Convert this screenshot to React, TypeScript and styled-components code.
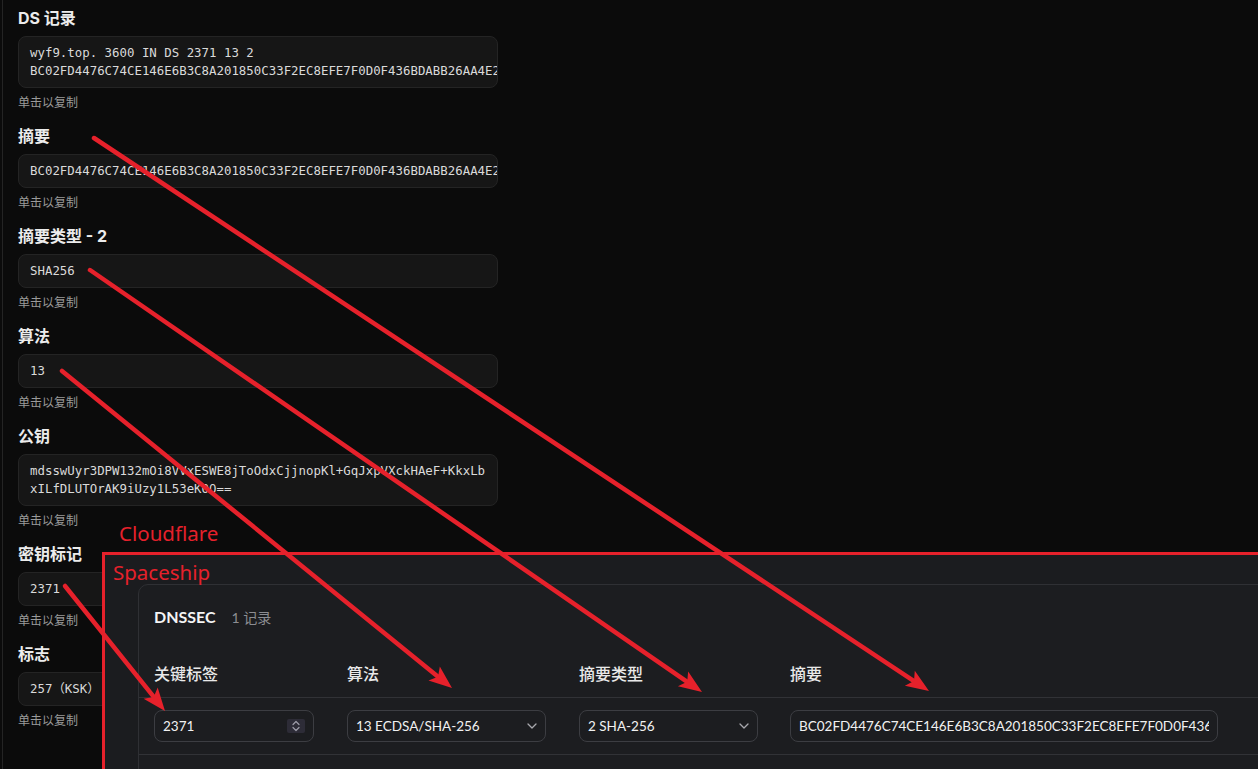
import React from 'react'
import styled, { createGlobalStyle } from 'styled-components'

const GlobalStyle = createGlobalStyle`
  html, body {
    margin: 0;
    padding: 0;
    background: #0b0b0b;
    overflow: hidden;
  }
  * {
    box-sizing: border-box;
  }
`

const Page = styled.div`
  position: relative;
  width: 1258px;
  height: 769px;
  overflow: hidden;
  background: #0b0b0b;
  font-family: Inter, "Noto Sans CJK SC", sans-serif;
`

const Sidebar = styled.div`
  margin-left: 2px;
  width: 500px;
  height: 100%;
  padding: 6px 0 0 15px;
  border-left: 1px solid #242424;
`

const Field = styled.section`
  margin-bottom: 13px;
`

const FieldLabel = styled.h3`
  margin: 0 0 6px;
  font-size: 16px;
  line-height: 24px;
  font-weight: 700;
  color: #ececec;
`

// long values are clipped by the box, the public key wraps anywhere
const CopyBox = styled.div<{ $wrap?: boolean }>`
  width: 480px;
  padding: 7px 11px;
  background: #161616;
  border: 1px solid #242424;
  border-radius: 8px;
  font-family: "DejaVu Sans Mono", "Noto Sans CJK SC", monospace;
  font-size: 12.4px;
  line-height: 18px;
  color: #dadada;
  overflow: hidden;
  white-space: ${p => (p.$wrap ? 'normal' : 'nowrap')};
  word-break: ${p => (p.$wrap ? 'break-all' : 'normal')};
`

const Hint = styled.div`
  margin-top: 5px;
  font-family: "Noto Sans CJK SC", sans-serif;
  font-size: 12px;
  line-height: 18px;
  color: #9a9a9a;
`

const Tag = styled.span<{ $left: number; $top: number }>`
  position: absolute;
  left: ${p => p.$left}px;
  top: ${p => p.$top}px;
  z-index: 3;
  font-family: "Noto Sans", "Open Sans", sans-serif;
  font-size: 20.5px;
  line-height: 26px;
  color: #e6212b;
  white-space: nowrap;
`

const Snapshot = styled.div`
  position: absolute;
  left: 102px;
  top: 552px;
  width: 1200px;
  height: 260px;
  padding: 29px 0 0 33px;
  background: #1b1c1f;
  border-top: 3px solid #e6212b;
  border-left: 3px solid #e6212b;
`

const Card = styled.div`
  width: 1200px;
  min-height: 260px;
  background: #1c1d20;
  border: 1px solid #2f3034;
  border-radius: 10px;
`

const CardHead = styled.div`
  display: flex;
  align-items: baseline;
  gap: 16px;
  padding: 21px 15px 0;
  line-height: 22px;
`

const CardTitle = styled.span`
  font-family: Lato, sans-serif;
  font-size: 16px;
  font-weight: 700;
  color: #f4f4f4;
`

const CardCount = styled.span`
  font-family: Lato, "Noto Sans CJK SC", sans-serif;
  font-size: 14px;
  color: #8c8d92;
`

const Row = styled.div<{ $head?: boolean }>`
  display: grid;
  grid-template-columns: 193px 232px 211px 1fr;
  align-items: center;
  padding: ${p => (p.$head ? '32px 15px 12px' : '12px 15px')};
  border-bottom: 1px solid #313236;
`

const HeadCell = styled.div`
  font-family: "Noto Sans CJK SC", sans-serif;
  font-size: 16px;
  line-height: 24px;
  font-weight: 500;
  color: #e9e9e9;
`

const Control = styled.div<{ $w: number }>`
  display: flex;
  align-items: center;
  gap: 8px;
  width: ${p => p.$w}px;
  height: 32px;
  padding: 0 8px;
  border: 1px solid #3c3d42;
  border-radius: 8px;
  font-family: Lato, sans-serif;
  font-size: 13.5px;
  color: #f1f1f1;
  white-space: nowrap;
`

const Value = styled.span`
  flex: 1;
  overflow: hidden;
`

const Spinner = styled.span`
  display: flex;
  align-items: center;
  justify-content: center;
  width: 18px;
  height: 14px;
  background: #2d2c37;
  border-radius: 2px;
`

const Overlay = styled.svg`
  position: absolute;
  left: 0;
  top: 0;
  z-index: 5;
  pointer-events: none;
`

const RED = '#e6212b'

const Arrow = ({ x1, y1, x2, y2 }: { x1: number; y1: number; x2: number; y2: number }) => {
  const len = Math.hypot(x2 - x1, y2 - y1)
  const ux = (x2 - x1) / len
  const uy = (y2 - y1) / len
  const px = -uy
  const py = ux
  const hl = 23
  const hw = 9
  const bx = x2 - ux * hl
  const by = y2 - uy * hl
  const nx = bx + ux * 5
  const ny = by + uy * 5
  const pts = [
    [x2, y2],
    [bx + px * hw, by + py * hw],
    [nx, ny],
    [bx - px * hw, by - py * hw],
  ].map(p => p.join(',')).join(' ')
  return (
    <g>
      <line x1={x1} y1={y1} x2={nx} y2={ny} stroke={RED} strokeWidth={4.5} strokeLinecap="round" />
      <polygon points={pts} fill={RED} />
    </g>
  )
}

const Chevron = () => (
  <svg width="10" height="6" viewBox="0 0 10 6">
    <path d="M1 1l4 4 4-4" fill="none" stroke="#a8a8ad" strokeWidth="1.3" strokeLinecap="round" strokeLinejoin="round" />
  </svg>
)

const StepIcon = () => (
  <svg width="8" height="12" viewBox="0 0 8 12">
    <path d="M1 4.5L4 1.5 7 4.5M1 7.5L4 10.5 7 7.5" fill="none" stroke="#9d9ca8" strokeWidth="1.2" strokeLinecap="round" strokeLinejoin="round" />
  </svg>
)

const HASH = 'BC02FD4476C74CE146E6B3C8A201850C33F2EC8EFE7F0D0F436BDABB26AA4E2'

const fields: { label: string; lines: string[]; wrap?: boolean }[] = [
  { label: 'DS 记录', lines: ['wyf9.top. 3600 IN DS 2371 13 2', HASH] },
  { label: '摘要', lines: [HASH] },
  { label: '摘要类型 - 2', lines: ['SHA256'] },
  { label: '算法', lines: ['13'] },
  { label: '公钥', lines: ['mdsswUyr3DPW132mOi8VVxESWE8jToOdxCjjnopKl+GqJxpVXckHAeF+KkxLbxILfDLUTOrAK9iUzy1L53eKOO=='], wrap: true },
  { label: '密钥标记', lines: ['2371'] },
  { label: '标志', lines: ['257（KSK）'] },
]

export default function App() {
  return (
    <Page>
      <GlobalStyle />
      <Sidebar>
        {fields.map(f => (
          <Field key={f.label}>
            <FieldLabel>{f.label}</FieldLabel>
            <CopyBox $wrap={f.wrap}>
              {f.lines.map(l => (
                <div key={l}>{l}</div>
              ))}
            </CopyBox>
            <Hint>单击以复制</Hint>
          </Field>
        ))}
      </Sidebar>

      <Tag $left={119} $top={520}>Cloudflare</Tag>

      <Snapshot>
        <Tag $left={8} $top={4}>Spaceship</Tag>
        <Card>
          <CardHead>
            <CardTitle>DNSSEC</CardTitle>
            <CardCount>1 记录</CardCount>
          </CardHead>
          <Row $head>
            <HeadCell>关键标签</HeadCell>
            <HeadCell>算法</HeadCell>
            <HeadCell>摘要类型</HeadCell>
            <HeadCell>摘要</HeadCell>
          </Row>
          <Row>
            <Control $w={160}>
              <Value>2371</Value>
              <Spinner><StepIcon /></Spinner>
            </Control>
            <Control $w={199}>
              <Value>13 ECDSA/SHA-256</Value>
              <Chevron />
            </Control>
            <Control $w={179}>
              <Value>2 SHA-256</Value>
              <Chevron />
            </Control>
            <Control $w={428}>
              <Value>{HASH}</Value>
            </Control>
          </Row>
        </Card>
      </Snapshot>

      <Overlay width={1258} height={769} viewBox="0 0 1258 769">
        <Arrow x1={94} y1={138} x2={929} y2={691} />
        <Arrow x1={90} y1={270} x2={702} y2={692} />
        <Arrow x1={62} y1={371} x2={452} y2={688} />
        <Arrow x1={65} y1={586} x2={165} y2={711} />
      </Overlay>
    </Page>
  )
}
